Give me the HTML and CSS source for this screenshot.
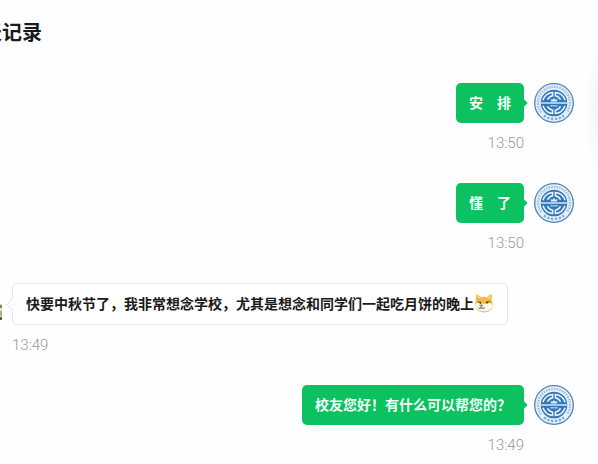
FILE: index.html
```
<!DOCTYPE html>
<html lang="zh-CN">
<head>
    <meta charset="UTF-8">
    <meta name="viewport" content="width=device-width, initial-scale=1.0">
    <title>聊天记录</title>
    <link rel="stylesheet" href="styles.css">
</head>
<body>
    <!-- school emblem, shared by every sent message -->
    <svg class="symbols" aria-hidden="true">
        <symbol id="emblem" viewBox="0 0 40 40">
            <circle cx="20" cy="20" r="19.3" fill="#eaf2f9" stroke="#4a82ba" stroke-width="1.3"/>
            <path d="M7.2 29.4A16 16 0 1 1 32.8 29.4" fill="none" stroke="#a3c1de" stroke-width="2.4" stroke-dasharray="1.7 1"/>
            <path d="M10 32.5A16 16 0 0 0 30 32.5" fill="none" stroke="#7fa8d1" stroke-width="2.4" stroke-dasharray="2.3 1.6"/>
            <circle cx="20" cy="20" r="13.3" fill="#3277b9"/>
            <g fill="none" stroke="#eef6fc" stroke-width="1.5">
                <path d="M9 17.2A11.2 11.2 0 0 1 18.6 9.5V12.8A7.2 7.2 0 0 0 13.5 16.8"/>
                <path d="M31 17.2A11.2 11.2 0 0 0 21.4 9.5V12.8A7.2 7.2 0 0 1 26.5 16.8"/>
                <path d="M9 22.8A11.2 11.2 0 0 0 18.6 30.5V27.2A7.2 7.2 0 0 1 13.5 23.2"/>
                <path d="M31 22.8A11.2 11.2 0 0 1 21.4 30.5V27.2A7.2 7.2 0 0 0 26.5 23.2"/>
            </g>
            <path d="M6.7 20H33.3" stroke="#eef6fc" stroke-width="1.3"/>
            <path d="M20 15L21.2 16.6L23.6 16.4L22.8 18.4H17.2L16.4 16.4L18.8 16.6Z" fill="#e4eff9"/>
            <path d="M16.5 22.8H23.5" stroke="#d4e4f3" stroke-width="1.6" stroke-dasharray="1.3 .6"/>
        </symbol>
    </svg>

    <main class="chat">
        <h1 class="chat-title">聊天记录</h1>

        <ol class="messages">
            <li class="message sent">
                <svg class="avatar" role="img" aria-label="学校"><use href="#emblem"/></svg>
                <div class="content">
                    <p class="bubble">安　排</p>
                    <time class="time">13:50</time>
                </div>
            </li>
            <li class="message sent">
                <svg class="avatar" role="img" aria-label="学校"><use href="#emblem"/></svg>
                <div class="content">
                    <p class="bubble">懂　了</p>
                    <time class="time">13:50</time>
                </div>
            </li>
            <li class="message received">
                <svg class="avatar" viewBox="0 0 40 40" role="img" aria-label="校友">
                    <path d="M26 21H40V37H26Z" fill="#dfe2cd"/>
                    <path d="M28 22H40V25H28Z" fill="#858258"/>
                    <path d="M26 28H40V33H26Z" fill="#a9b47d"/>
                    <path d="M26 34H40V37H26Z" fill="#5f5f42"/>
                </svg>
                <div class="content">
                    <p class="bubble">快要中秋节了，我非常想念学校，尤其是想念和同学们一起吃月饼的晚上<svg class="emoji" viewBox="0 0 20 20" role="img" aria-label="狗头">
                        <path d="M2.3 2C1.6 1 3 .8 6.8 4.3Q10 3.3 13 4.2Q16.5 .6 17.6 1.5Q18.4 4 17.6 7.3C20.5 13 18 19 10 19C2 19-.4 13 2 7.5Q1.4 4 2.3 2Z" fill="#f3bd45"/>
                        <path d="M1.6 11Q4 9 7 10.5L9.500 11L13 10.5Q16.5 9 18.5 11.5C19 16 15 18.5 10 18.5C4 18.5 .5 15 1.6 11Z" fill="#fff8e8"/>
                        <path d="M3.5 5L4 3L6 5ZM14 5L16.5 3L16.3 6Z" fill="#f8dda2"/>
                        <path d="M3.5 8.8L7 9.3M12 9.1L16.5 8.6" stroke="#6b5a38" stroke-width="1"/>
                        <circle cx="6.3" cy="9.800" r=".9" fill="#2f2a22"/>
                        <circle cx="13" cy="9.600" r=".9" fill="#2f2a22"/>
                        <path d="M5.5 12.2H8.5L7.2 13.5V14.8M4.5 14.8Q6 16 7.2 14.8Q9 16 11 14.8" fill="none" stroke="#3d3429" stroke-width=".8"/>
                        <path d="M2 15Q4 19 10 19Q16 19 18 15" fill="none" stroke="#cfc5b0" stroke-width="1"/>
                    </svg></p>
                    <time class="time">13:49</time>
                </div>
            </li>
            <li class="message sent">
                <svg class="avatar" role="img" aria-label="学校"><use href="#emblem"/></svg>
                <div class="content">
                    <p class="bubble">校友您好！有什么可以帮您的？</p>
                    <time class="time">13:49</time>
                </div>
            </li>
        </ol>
    </main>

    <div class="edge-shadow"></div>
</body>
</html>
```
FILE: styles.css
```
* {
    box-sizing: border-box;
}

body {
    margin: 0;
    background-color: #fefefe;
    color: #1a1a1a;
    font-family: "Noto Sans CJK SC", sans-serif;
    overflow: hidden;
}

.symbols {
    display: none;
}

/* the panel runs past the left side of the window */
.chat {
    margin-left: -38px;
    padding: 17px 24px 0 0;
}

.chat-title {
    margin: 0 0 36px;
    font-size: 20px;
    font-weight: 700;
    line-height: 30px;
}

.messages {
    display: flex;
    flex-direction: column;
    gap: 30px;
    margin: 0;
    padding: 0;
    list-style: none;
}

.message {
    display: flex;
    align-items: flex-start;
    gap: 10px;
}

.sent {
    flex-direction: row-reverse;
}

.avatar {
    flex: none;
    width: 40px;
    height: 40px;
}

.content {
    display: flex;
    flex-direction: column;
    align-items: flex-start;
    gap: 10px;
}

.sent .content {
    align-items: flex-end;
}

.bubble {
    position: relative;
    display: flex;
    align-items: center;
    margin: 0;
    padding: 9px 13px 11px;
    border-radius: 5px;
    font-size: 14px;
    font-weight: 700;
    line-height: 20px;
}

.sent .bubble {
    background-color: #0bc160;
    color: #f4fff8;
}

.received .bubble {
    background-color: white;
    border: 1px solid #e6e6e9;
}

/* little arrow pointing at the avatar */
.bubble::after {
    content: "";
    position: absolute;
    top: 16px;
    width: 8px;
    height: 8px;
    transform: rotate(45deg);
}

.sent .bubble::after {
    right: -2px;
    background-color: #0bc160;
}

.received .bubble::after {
    left: -5px;
    background-color: white;
    border: solid #e6e6e9;
    border-width: 0 0 1px 1px;
}

.emoji {
    flex: none;
    width: 20px;
    height: 20px;
}

.time {
    color: #989898;
    font-family: Roboto, "Liberation Sans", sans-serif;
    font-size: 15px;
    font-weight: 300;
    line-height: 20px;
}

.edge-shadow {
    position: absolute;
    top: 48px;
    right: 0;
    width: 14px;
    height: 122px;
    background: radial-gradient(ellipse at right, #f4f4f5, #fefefe 72%);
}
```
